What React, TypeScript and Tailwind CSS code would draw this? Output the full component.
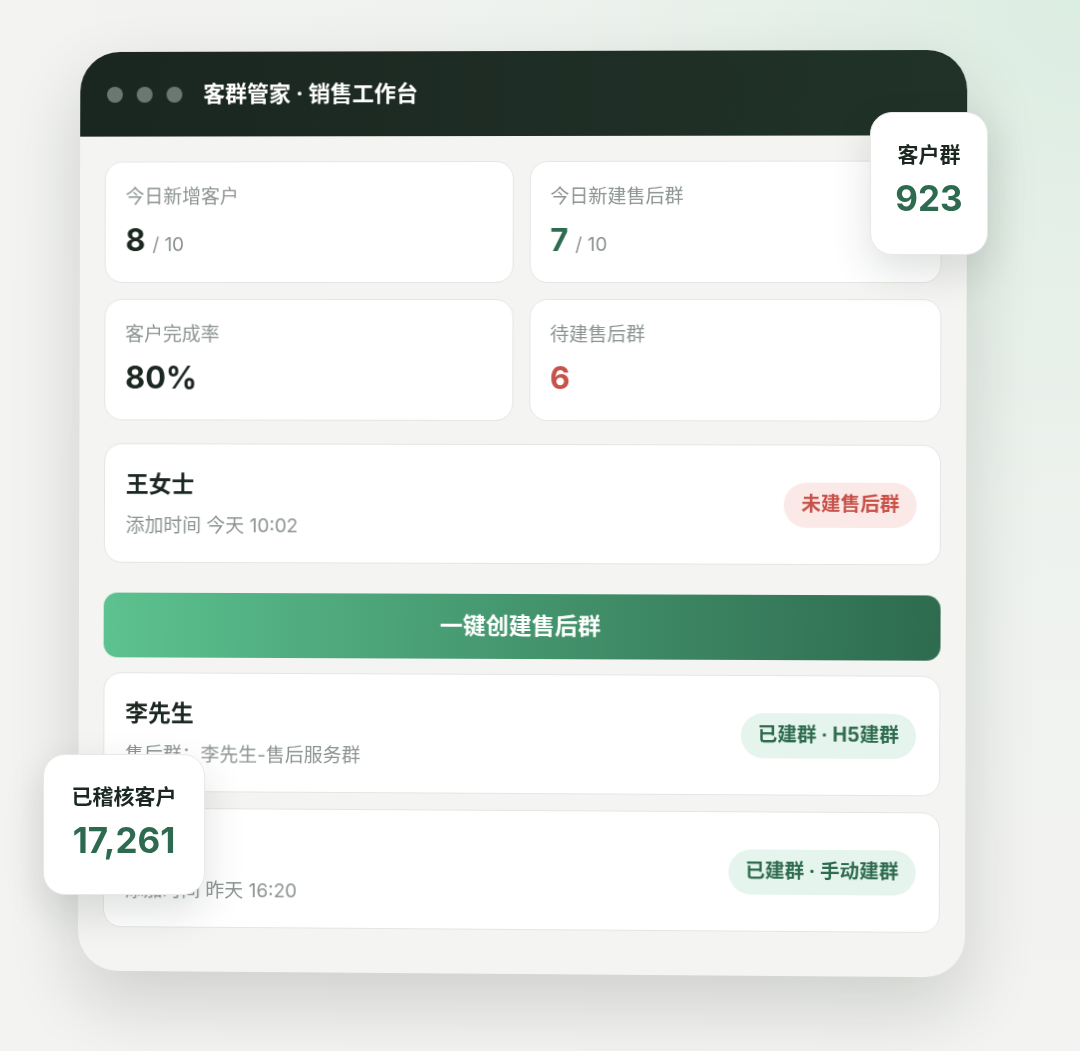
import React from "react";

const font = "font-['Inter','Noto_Sans_CJK_SC',sans-serif]";

type Stat = { label: string; value: string; total?: string; tone: string };

const stats: Stat[] = [
  { label: "今日新增客户", value: "8", total: "/ 10", tone: "text-[#1b2721]" },
  { label: "今日新建售后群", value: "7", total: "/ 10", tone: "text-[#2e6b4f]" },
  { label: "客户完成率", value: "80%", tone: "text-[#1b2721]" },
  { label: "待建售后群", value: "6", tone: "text-[#c8524a]" },
];

const StatCard = ({ stat }: { stat: Stat }) => (
  <div className="h-[122px] rounded-[18px] border border-[#e5e6e3] bg-white px-[20px] pt-[22px]">
    <div className="text-[19px] leading-[26px] text-[#8b948f]">{stat.label}</div>
    <div className="mt-[12px] flex items-baseline gap-[7px] leading-[36px]">
      <span className={`text-[31px] font-bold ${stat.tone}`}>{stat.value}</span>
      {stat.total && <span className="text-[19px] text-[#8b948f]">{stat.total}</span>}
    </div>
  </div>
);

const Badge = ({ text, red }: { text: string; red?: boolean }) => (
  <span
    className={
      red
        ? "flex h-[45px] items-center rounded-full bg-[#fbe9e7] px-[17px] text-[19.5px] font-bold text-[#c8524a]"
        : "flex h-[45px] items-center rounded-full bg-[#e5f4ec] px-[17px] text-[19.5px] font-bold text-[#2e6b4f]"
    }
  >
    {text}
  </span>
);

const CustomerCard = ({ name, sub, badge, red }: { name: string; sub: string; badge: string; red?: boolean }) => (
  <div className="flex h-[120px] items-center justify-between rounded-[18px] border border-[#e5e6e3] bg-white pl-[21px] pr-[23px]">
    <div className="flex flex-col">
      <span className="text-[23px] font-bold leading-[32px] text-[#1b2721]">{name}</span>
      <span className="mt-[13px] text-[19px] leading-[26px] text-[#8b948f]">{sub}</span>
    </div>
    <Badge text={badge} red={red} />
  </div>
);

const FloatCard = ({ label, value, className }: { label: string; value: string; className: string }) => (
  <div
    className={`absolute flex flex-col items-center rounded-[22px] border border-[#e8e9e6] bg-white shadow-[0_16px_40px_rgba(20,40,30,0.14)] ${className}`}
  >
    <span className="mt-[28px] text-[21px] font-bold leading-[28px] text-[#1b2721]">{label}</span>
    <span className="mt-[8px] text-[35px] font-bold leading-[42px] text-[#2d6a4f]">{value}</span>
  </div>
);

export default function App() {
  return (
    <div
      className={`relative h-[1051px] w-[1080px] overflow-hidden bg-[radial-gradient(ellipse_at_100%_0%,#dcede2_0%,#eef2ee_35%,#f3f3f1_70%)] ${font}`}
    >
      <div className="pl-[77px] pt-[51px]">
        <div className="h-[923px] w-[887px] overflow-hidden rounded-[40px] bg-[#f4f4f2] shadow-[0_30px_70px_rgba(20,30,25,0.16)] [transform:perspective(1600px)_rotateY(-1deg)_rotate(0.15deg)]">
          <div className="flex h-[85px] items-center bg-linear-to-r from-[#1a2620] to-[#213329] pl-[27px]">
            <div className="flex gap-[14px]">
              <span className="h-4 w-4 rounded-full bg-[#6c7771]" />
              <span className="h-4 w-4 rounded-full bg-[#6c7771]" />
              <span className="h-4 w-4 rounded-full bg-[#6c7771]" />
            </div>
            <span className="ml-[21px] text-[22px] font-bold text-white">客群管家 · 销售工作台</span>
          </div>

          <div className="px-[25px] pt-[25px]">
            <div className="grid grid-cols-2 gap-4">
              {stats.map((s) => (
                <StatCard key={s.label} stat={s} />
              ))}
            </div>

            <div className="mt-[23px]">
              <CustomerCard name="王女士" sub="添加时间 今天 10:02" badge="未建售后群" red />
            </div>

            <button className="mt-[30px] flex h-[65px] w-full items-center justify-center rounded-[14px] bg-linear-to-r from-[#5cc28f] to-[#2e6b4f] text-[23px] font-bold text-white">
              一键创建售后群
            </button>

            <div className="mt-[15px] flex flex-col gap-4">
              <CustomerCard name="李先生" sub="售后群：李先生-售后服务群" badge="已建群 · H5建群" />
              <CustomerCard name="陈女士" sub="添加时间 昨天 16:20" badge="已建群 · 手动建群" />
            </div>
          </div>
        </div>
      </div>

      <FloatCard label="客户群" value="923" className="left-[870px] top-[112px] h-[143px] w-[118px]" />
      <FloatCard label="已稽核客户" value="17,261" className="left-[43px] top-[754px] h-[141px] w-[162px]" />
    </div>
  );
}
